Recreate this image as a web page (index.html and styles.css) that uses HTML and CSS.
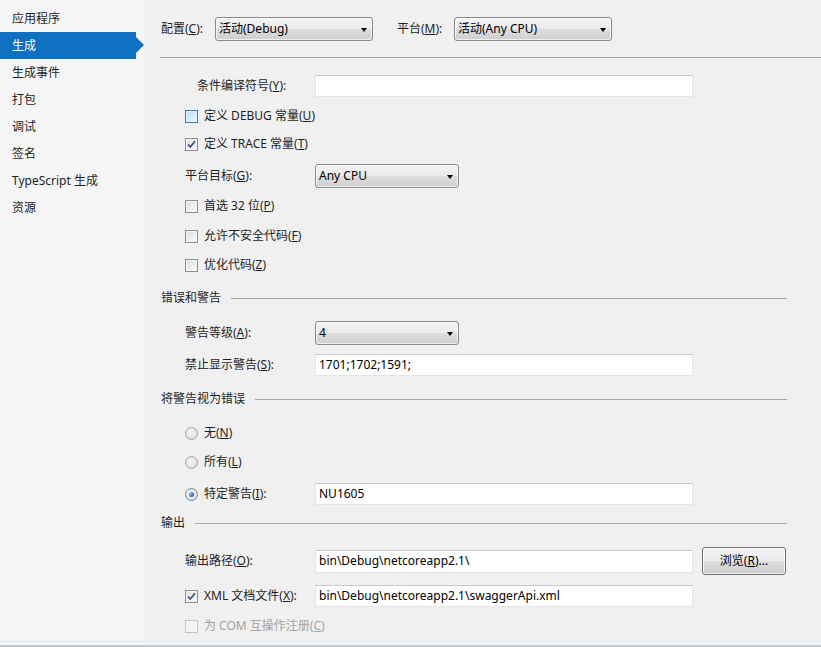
FILE: index.html
```html
<!DOCTYPE html>
<html lang="zh-CN">
<head>
<meta charset="utf-8">
<title>生成</title>
<link rel="stylesheet" href="styles.css">
</head>
<body>
<div class="window">
  <div class="content">
    <nav class="sidebar">
      <div class="nav-item">应用程序</div>
      <div class="nav-item active">生成</div>
      <div class="nav-item">生成事件</div>
      <div class="nav-item">打包</div>
      <div class="nav-item">调试</div>
      <div class="nav-item">签名</div>
      <div class="nav-item">TypeScript 生成</div>
      <div class="nav-item">资源</div>
    </nav>
    <main class="main">
      <div class="top-row">
        <span class="top-label cfg">配置(<u>C</u>):</span>
        <div class="select top-select"><span>活动(Debug)</span><i class="caret"></i></div>
        <span class="top-label plat">平台(<u>M</u>):</span>
        <div class="select top-select"><span>活动(Any CPU)</span><i class="caret"></i></div>
      </div>
      <div class="sep"></div>
      <div class="form">
        <div class="row mt16">
          <span class="label cond">条件编译符号(<u>Y</u>):</span>
          <div class="textbox"></div>
        </div>
        <div class="row mt6">
          <span class="cb cb-hot"></span><span class="cb-text">定义 DEBUG 常量(<u>U</u>)</span>
        </div>
        <div class="row mt4">
          <span class="cb"><svg viewBox="0 0 11 11" class="tick"><path d="M2 5.5 L4.3 8 L9 2.2"/></svg></span><span class="cb-text">定义 TRACE 常量(<u>T</u>)</span>
        </div>
        <div class="row mt8">
          <span class="label">平台目标(<u>G</u>):</span>
          <div class="select small-select"><span>Any CPU</span><i class="caret"></i></div>
        </div>
        <div class="row mt6">
          <span class="cb"></span><span class="cb-text">首选 32 位(<u>P</u>)</span>
        </div>
        <div class="row mt6">
          <span class="cb"></span><span class="cb-text">允许不安全代码(<u>F</u>)</span>
        </div>
        <div class="row mt5">
          <span class="cb"></span><span class="cb-text">优化代码(<u>Z</u>)</span>
        </div>

        <div class="section mt9"><span>错误和警告</span><i class="rule"></i></div>
        <div class="row mt11">
          <span class="label">警告等级(<u>A</u>):</span>
          <div class="select small-select"><span>4</span><i class="caret"></i></div>
        </div>
        <div class="row mt8">
          <span class="label">禁止显示警告(<u>S</u>):</span>
          <div class="textbox">1701;1702;1591;</div>
        </div>

        <div class="section mt10"><span>将警告视为错误</span><i class="rule"></i></div>
        <div class="row mt10">
          <span class="radio"></span><span class="cb-text">无(<u>N</u>)</span>
        </div>
        <div class="row mt5">
          <span class="radio"></span><span class="cb-text">所有(<u>L</u>)</span>
        </div>
        <div class="row mt8">
          <span class="radio on"></span><span class="cb-text radio-label">特定警告(<u>I</u>):</span>
          <div class="textbox">NU1605</div>
        </div>

        <div class="section mt5"><span>输出</span><i class="rule"></i></div>
        <div class="row tall mt12">
          <span class="label">输出路径(<u>O</u>):</span>
          <div class="textbox tb23">bin\Debug\netcoreapp2.1\</div>
          <div class="button">浏览(<u>R</u>)...</div>
        </div>
        <div class="row mt9">
          <span class="cb"><svg viewBox="0 0 11 11" class="tick"><path d="M2 5.5 L4.3 8 L9 2.2"/></svg></span><span class="cb-text xml-label">XML 文档文件(<u>X</u>):</span>
          <div class="textbox">bin\Debug\netcoreapp2.1\swaggerApi.xml</div>
        </div>
        <div class="row mt6 disabled">
          <span class="cb cb-off"></span><span class="cb-text">为 COM 互操作注册(<u>C</u>)</span>
        </div>
      </div>
    </main>
  </div>
  <div class="statusbar"></div>
</div>
</body>
</html>
```

FILE: styles.css
```css
* { box-sizing: border-box; }

body {
  margin: 0;
  background: #f0f0f0;
  font-family: "Noto Sans", "Noto Sans CJK SC", sans-serif;
  font-size: 12px;
  line-height: 16px;
  color: #1e1e1e;
}

u { text-decoration: underline; text-underline-offset: 1px; }

.window {
  width: 821px;
  height: 647px;
  display: flex;
  flex-direction: column;
  overflow: hidden;
}

.content {
  flex: 1;
  display: flex;
  min-height: 0;
}

/* ---------- sidebar ---------- */
.sidebar {
  width: 144px;
  flex: none;
  background: #f5f5f5;
  padding-top: 5px;
}

.nav-item {
  height: 27px;
  display: flex;
  align-items: center;
  padding-left: 12px;
  color: #1e1e1e;
  white-space: nowrap;
}

.nav-item.active {
  position: relative;
  width: 136px;
  background: #0f6fc0;
  color: #ffffff;
}

.nav-item.active::after {
  content: "";
  position: absolute;
  left: 136px;
  top: 5px;
  border-left: 8px solid #0f6fc0;
  border-top: 8.5px solid transparent;
  border-bottom: 8.5px solid transparent;
}

/* ---------- main ---------- */
.main {
  flex: 1;
  background: #f0f0f0;
  padding-top: 17px;
  padding-left: 17px;
}

.top-row {
  height: 24px;
  display: flex;
  align-items: center;
}

.top-label { white-space: nowrap; }
.top-label.cfg { width: 54px; }
.top-label.plat { width: 57px; margin-left: 24px; }

.select {
  height: 24px;
  border: 1px solid #8a8a8a;
  border-radius: 3px;
  background: linear-gradient(#f3f3f3 0%, #ebebeb 48%, #dddddd 52%, #cfcfcf 100%);
  box-shadow: inset 0 0 0 1px rgba(255,255,255,0.7);
  display: flex;
  align-items: center;
  justify-content: space-between;
  padding: 0 5px 0 3px;
  color: #000;
}

.top-select { width: 158px; }
.small-select { width: 144px; }

.caret {
  width: 0;
  height: 0;
  border-left: 3.5px solid transparent;
  border-right: 3.5px solid transparent;
  border-top: 4px solid #000;
  margin-top: 1px;
}

.sep {
  height: 1px;
  background: #a0a0a0;
  margin-top: 16px;
  margin-left: -1px;
}

.form {
  padding-right: 34px;
}

.row {
  height: 24px;
  display: flex;
  align-items: center;
  padding-left: 24px;
}

.row.tall { height: 28px; }

.label {
  width: 130px;
  flex: none;
  white-space: nowrap;
}

.label.cond { padding-left: 12px; }

.textbox {
  width: 378px;
  height: 22px;
  background: #ffffff;
  border: 1px solid #e3e4e8;
  border-top-color: #c8cad0;
  padding-left: 3px;
  display: flex;
  align-items: center;
  color: #000;
  white-space: nowrap;
}

.textbox.tb23 { height: 23px; }

.button {
  width: 84px;
  height: 28px;
  margin-left: 9px;
  border: 1px solid #707070;
  border-radius: 3px;
  background: linear-gradient(#f2f2f2 0%, #ebebeb 48%, #dddddd 52%, #cfcfcf 100%);
  box-shadow: inset 0 0 0 1px rgba(255,255,255,0.75);
  display: flex;
  align-items: center;
  justify-content: center;
  color: #000;
}

/* checkboxes */
.cb {
  width: 13px;
  height: 13px;
  flex: none;
  border: 1px solid #8e8f8f;
  background: linear-gradient(135deg, #dcdcdc 0%, #f0f0f0 60%, #fbfbfb 100%);
  box-shadow: inset 0 0 0 1px #f4f4f4;
  display: flex;
  align-items: center;
  justify-content: center;
}

.cb-hot {
  border-color: #3c7fb1;
  background: linear-gradient(135deg, #b9dcf3 0%, #dbeefb 60%, #eaf6fd 100%);
  box-shadow: inset 0 0 0 1px #e3f1fb;
}

.cb-off {
  border-color: #c4c4c4;
  background: #f4f4f4;
  box-shadow: none;
}

.tick {
  width: 11px;
  height: 11px;
}

.tick path {
  fill: none;
  stroke: #3d5078;
  stroke-width: 1.7;
}

.cb-text {
  margin-left: 6px;
  white-space: nowrap;
}

.xml-label { width: 111px; flex: none; }
.radio-label { width: 111px; flex: none; }

.disabled { color: #a3a3a3; }

/* radios */
.radio {
  width: 13px;
  height: 13px;
  flex: none;
  border-radius: 50%;
  border: 1px solid #a2a2a2;
  background: radial-gradient(circle at 40% 40%, #f8f8f8 0%, #e4e4e4 60%, #d0d0d0 100%);
  display: flex;
  align-items: center;
  justify-content: center;
}

.radio.on {
  border-color: #6d8bb0;
}

.radio.on::before {
  content: "";
  width: 5px;
  height: 5px;
  border-radius: 50%;
  background: radial-gradient(circle at 35% 35%, #8fc0f0 0%, #2a64b0 70%, #1a4c90 100%);
}

/* section headings */
.section {
  height: 24px;
  display: flex;
  align-items: center;
  white-space: nowrap;
}

.rule {
  flex: 1;
  height: 1px;
  background: #a8a8a8;
  margin-left: 10px;
}

/* vertical rhythm */
.mt4 { margin-top: 4px; }
.mt5 { margin-top: 5px; }
.mt6 { margin-top: 6px; }
.mt8 { margin-top: 8px; }
.mt9 { margin-top: 9px; }
.mt10 { margin-top: 10px; }
.mt11 { margin-top: 11px; }
.mt12 { margin-top: 12px; }
.mt16 { margin-top: 16px; }

/* bottom strip */
.statusbar {
  height: 6px;
  flex: none;
  background: #f3f6f9;
  border-top: 1px solid #dfe7ee;
  border-bottom: 2px solid #c3c8cd;
}
```
